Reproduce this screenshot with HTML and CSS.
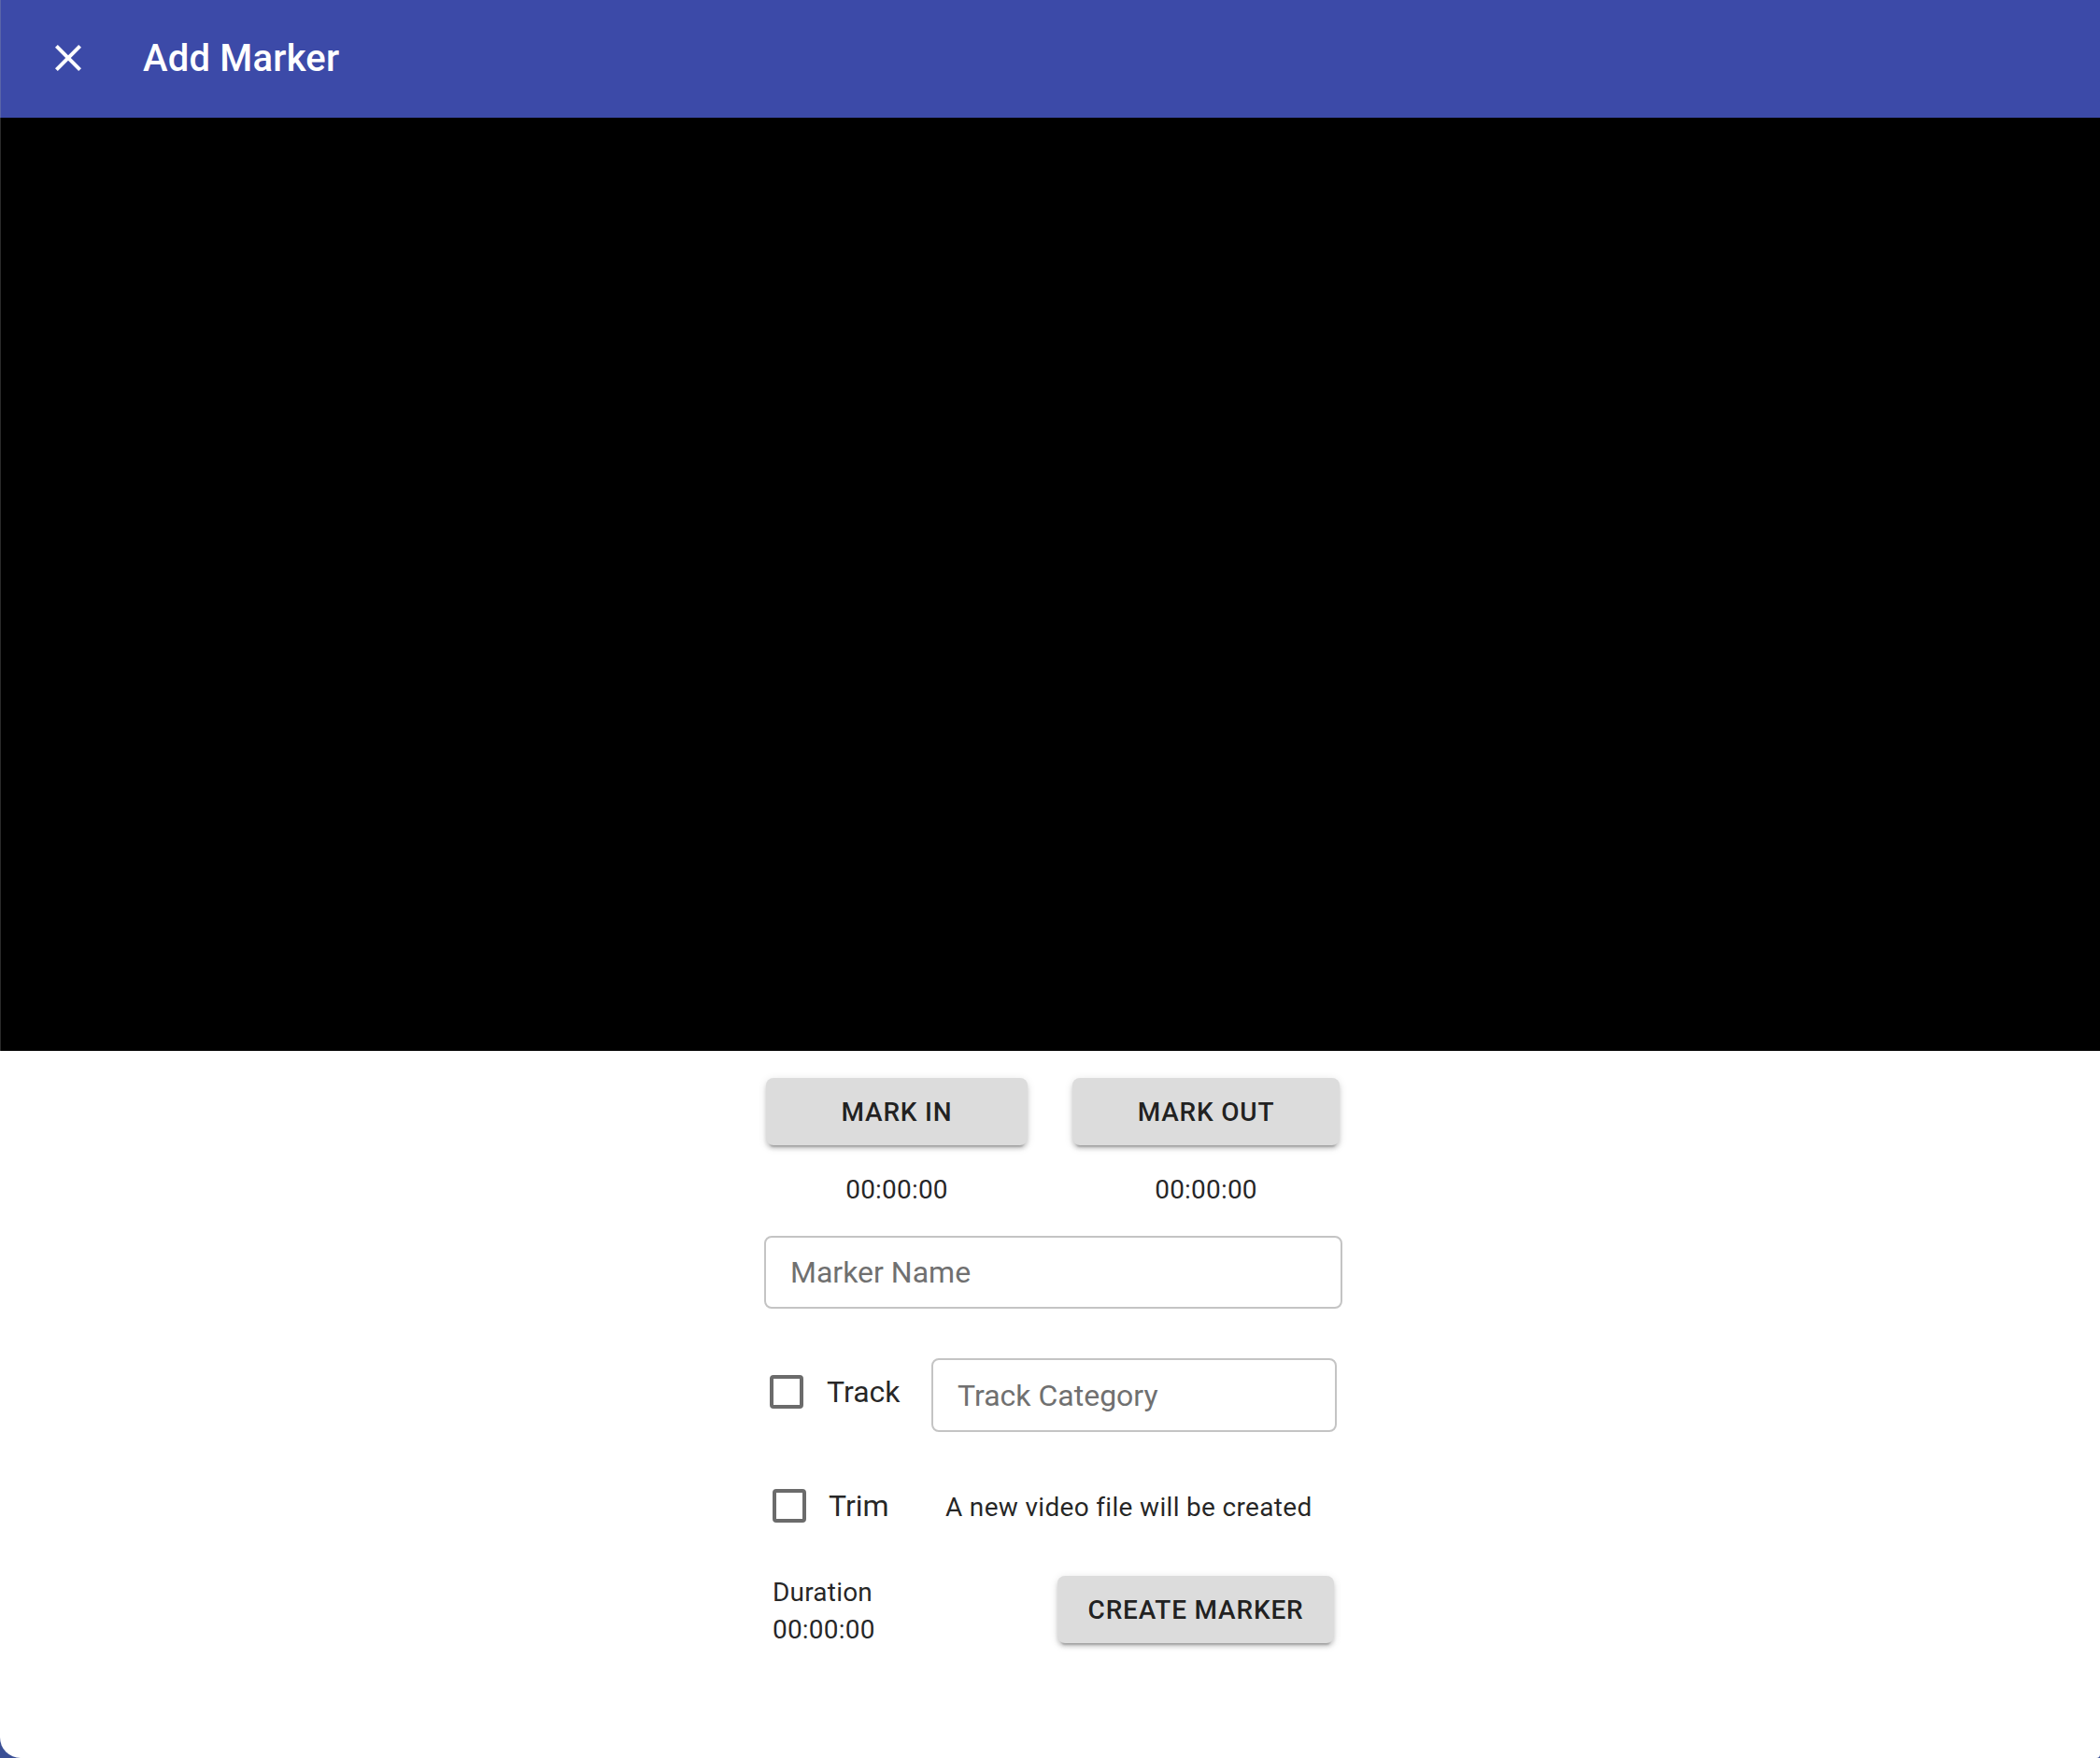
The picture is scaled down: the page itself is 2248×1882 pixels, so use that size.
FILE: index.html
```html
<!DOCTYPE html>
<html lang="en">
<head>
<meta charset="utf-8">
<title>Add Marker</title>
<link rel="stylesheet" href="styles.css">
</head>
<body>
<div class="dialog">
  <header class="toolbar">
    <button class="close-btn" aria-label="Close">
      <svg viewBox="0 0 24 24" width="48" height="48"><path fill="#fff" d="M19 6.41L17.59 5 12 10.59 6.41 5 5 6.41 10.59 12 5 17.59 6.41 19 12 13.41 17.59 19 19 17.59 13.41 12z"/></svg>
    </button>
    <h1 class="title">Add Marker</h1>
  </header>

  <div class="video"></div>

  <div class="form">
    <div class="mark-row">
      <button class="btn btn-in">MARK IN</button>
      <button class="btn btn-out">MARK OUT</button>
    </div>
    <div class="time-row">
      <span class="time time-in">00:00:00</span>
      <span class="time time-out">00:00:00</span>
    </div>

    <div class="field field-name">
      <input type="text" placeholder="Marker Name">
    </div>

    <div class="track-row">
      <label class="check check-track"><span class="box"></span><span class="check-label">Track</span></label>
      <div class="field field-cat">
        <input type="text" placeholder="Track Category">
      </div>
    </div>

    <div class="trim-row">
      <label class="check check-trim"><span class="box"></span><span class="check-label">Trim</span></label>
      <span class="note">A new video file will be created</span>
    </div>

    <div class="bottom-row">
      <div class="duration">
        <div>Duration</div>
        <div>00:00:00</div>
      </div>
      <button class="btn btn-create">CREATE MARKER</button>
    </div>
  </div>
</div>
</body>
</html>
```

FILE: styles.css
```css
* { box-sizing: border-box; }

html, body {
  margin: 0;
  padding: 0;
}

body {
  background: #3a4f95;
  font-family: Roboto, "Liberation Sans", Arial, sans-serif;
  color: rgba(0, 0, 0, 0.87);
}

.dialog {
  height: 1882px;
  background: #fff;
  border-bottom-left-radius: 22px;
  border-bottom-right-radius: 4px;
  overflow: hidden;
  display: flex;
  flex-direction: column;
}

.toolbar {
  height: 126px;
  flex: none;
  background: #3c4aa8;
  display: flex;
  align-items: center;
  padding-left: 48px;
  border-left: 1px solid #5a64a8;
}

.close-btn {
  width: 48px;
  height: 48px;
  padding: 0;
  margin: 0;
  border: 0;
  background: transparent;
  display: flex;
  margin-top: -2px;
}

.title {
  margin: 0 0 0 56px;
  font-size: 40px;
  font-weight: 500;
  color: #fff;
  line-height: 48px;
  letter-spacing: 0.2px;
}

.video {
  height: 999px;
  flex: none;
  background: #000;
  border-left: 1px solid #2a2a2a;
}

.form {
  width: 626px;
  margin: 0 auto;
  padding-left: 7px;
  display: flex;
  flex-direction: column;
}

.mark-row {
  display: flex;
  gap: 48px;
  padding-left: 2px;
  margin-top: 29px;
}

.btn {
  height: 72px;
  border: 0;
  border-radius: 8px;
  background: #dcdcdc;
  color: rgba(0, 0, 0, 0.87);
  font-family: Roboto, "Liberation Sans", Arial, sans-serif;
  font-size: 28px;
  font-weight: 500;
  letter-spacing: 0.8px;
  box-shadow: 0 6px 2px -4px rgba(0, 0, 0, 0.2), 0 4px 4px 0 rgba(0, 0, 0, 0.14), 0 2px 10px 0 rgba(0, 0, 0, 0.12);
  padding: 0;
}

.btn-in { width: 280px; }
.btn-out { width: 286px; }

.time-row {
  display: flex;
  gap: 48px;
  padding-left: 2px;
  margin-top: 28px;
}

.time {
  font-size: 28px;
  line-height: 40px;
  text-align: center;
  letter-spacing: 0.2px;
}

.time-in { width: 280px; }
.time-out { width: 286px; }

.field input {
  width: 100%;
  height: 100%;
  border: 2px solid #c4c4c4;
  border-radius: 8px;
  padding: 0 26px;
  font-family: Roboto, "Liberation Sans", Arial, sans-serif;
  font-size: 32px;
  color: rgba(0, 0, 0, 0.87);
  background: #fff;
  outline: none;
}

.field input::placeholder {
  color: #707070;
  opacity: 1;
}

.field-name {
  height: 78px;
  width: 619px;
  margin-top: 29px;
}

.track-row {
  display: flex;
  align-items: center;
  margin-top: 53px;
  height: 79px;
}

.check {
  display: flex;
  align-items: center;
}

.box {
  width: 36px;
  height: 36px;
  border: 4px solid #6b6b6b;
  border-radius: 4px;
  flex: none;
}

.check-label {
  font-size: 32px;
  line-height: 40px;
  margin-left: 25px;
}

.check-track {
  padding-left: 6px;
  width: 179px;
  margin-top: -8px;
}

.field-cat {
  width: 434px;
  height: 79px;
}

.trim-row {
  display: flex;
  align-items: center;
  margin-top: 61px;
  height: 36px;
}

.check-trim {
  padding-left: 9px;
  width: 194px;
}

.check-trim .check-label {
  margin-left: 24px;
}

.note {
  font-size: 28px;
  line-height: 40px;
  margin-top: 4px;
  letter-spacing: 0.32px;
}

.bottom-row {
  display: flex;
  align-items: flex-start;
  margin-top: 57px;
  padding-left: 9px;
}

.duration {
  font-size: 28px;
  line-height: 40px;
  width: 305px;
  margin-top: -2px;
  letter-spacing: 0.2px;
}

.btn-create {
  width: 296px;
}
```
